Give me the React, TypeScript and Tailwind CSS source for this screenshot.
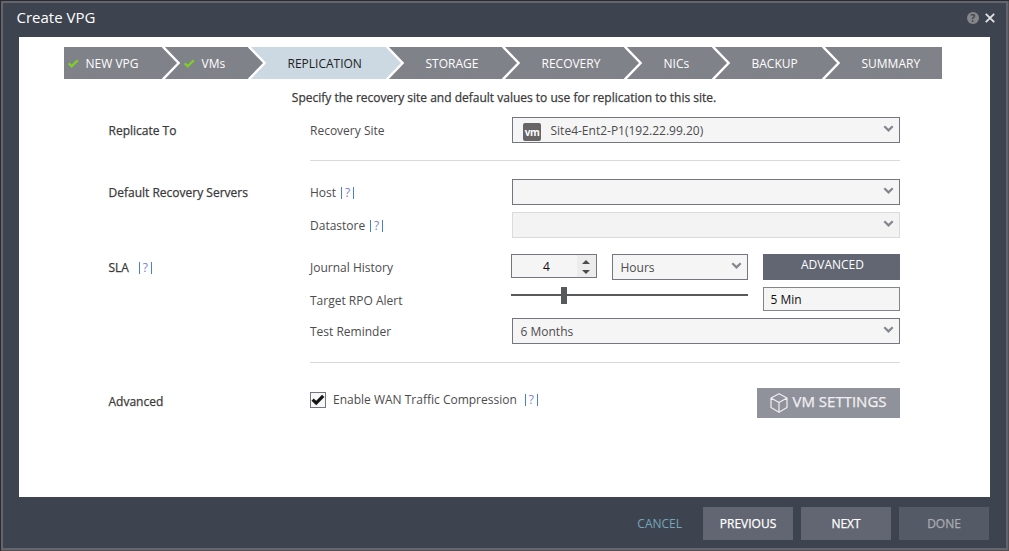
import React, { useState } from 'react';
import clsx from 'clsx';

interface Step {
  label: string;
  width: string;
  done?: boolean;
  active?: boolean;
}

const STEPS: Step[] = [
  { label: 'NEW VPG', width: 'w-[98px]', done: true },
  { label: 'VMs', width: 'w-[86px]', done: true },
  { label: 'REPLICATION', width: 'w-[138px]', active: true },
  { label: 'STORAGE', width: 'w-[116px]' },
  { label: 'RECOVERY', width: 'w-[122px]' },
  { label: 'NICs', width: 'w-[88px]' },
  { label: 'BACKUP', width: 'w-[110px]' },
  { label: 'SUMMARY', width: 'w-[120px]' },
];

const Arrow: React.FC<{ active?: boolean }> = ({ active }) => (
  <svg className="absolute left-full top-0 z-10" width="19" height="32" viewBox="0 0 19 32">
    <path d="M0 0H1.3L16.6 16L1.3 32H0Z" fill={active ? '#ccd9e2' : '#808289'} />
    <path d="M0.8 -0.5L16.6 16L0.8 32.5" fill="none" stroke="#fff" strokeWidth="2.4" />
  </svg>
);

const Wizard = () => (
  <div className="flex h-8 w-[878px]">
    {STEPS.map((step, i) => (
      <div
        key={step.label}
        className={clsx(
          'relative flex shrink-0 items-center whitespace-nowrap text-[12px]',
          step.width,
          i === 0 ? 'pl-1' : 'pl-[22px]',
          step.active ? 'bg-[#ccd9e2] text-[#222]' : 'bg-[#808289] text-white',
        )}
      >
        <span className="flex w-[17.5px] shrink-0">
          {step.done && (
            <svg width="11" height="9" viewBox="0 0 11 9">
              <path d="M0.6 4.4L3.7 7.2L9.8 1.2" fill="none" stroke="#7ed321" strokeWidth="2.2" />
            </svg>
          )}
        </span>
        <span className="pt-[2px]">{step.label}</span>
        {i < STEPS.length - 1 && <Arrow active={step.active} />}
      </div>
    ))}
  </div>
);

const Hint = ({ className }: { className?: string }) => (
  <span
    className={clsx(
      'inline-flex h-3 w-[13px] items-center justify-center border-x border-[#4a7fd0] text-[12px] leading-3 text-[#7b80d8]',
      className,
    )}
  >
    ?
  </span>
);

const Select: React.FC<{ className?: string; disabled?: boolean; icon?: React.ReactNode; children?: React.ReactNode }> = ({
  className,
  disabled,
  icon,
  children,
}) => (
  <div
    className={clsx(
      'flex h-[26px] items-center justify-between border pl-[7.5px] pr-[5px] text-[#4c4c4e]',
      disabled ? 'border-[#dbdbdb] bg-[#f3f3f3]' : 'border-[#72777f] bg-[#f5f5f5]',
      className,
    )}
  >
    <span className="flex items-center">
      {icon}
      <span className="pt-[2px]">{children}</span>
    </span>
    <svg className="-mt-[2px]" width="11" height="8" viewBox="0 0 11 8">
      <path d="M1.3 1.3L5.5 5.4L9.7 1.3" fill="none" stroke="#83868c" strokeWidth="2.2" />
    </svg>
  </div>
);

const Row: React.FC<{ section?: React.ReactNode; label: React.ReactNode; className?: string; children?: React.ReactNode }> = ({
  section,
  label,
  className,
  children,
}) => (
  <div className={clsx('flex h-[26px] items-center', className)}>
    <div className="flex w-[202px] items-center pl-[0.5px] pt-[2px] text-[#3a3a3a] [-webkit-text-stroke:0.25px_#3a3a3a]">
      {section}
    </div>
    <div className="flex w-[202px] items-center pt-[2px]">{label}</div>
    {children}
  </div>
);

export default function App() {
  const [compression, setCompression] = useState(true);

  return (
    <div className="h-[551px] w-[1009px] overflow-hidden border-l border-t border-[#2b2a2e] bg-[#544e50] font-['Open_Sans',sans-serif] text-[12px] text-[#4c4c4e]">
      <div className="flex h-[549px] w-[1007px] flex-col border-2 border-[#63656f] bg-[#3e444f]">
        <header className="flex h-[34px] items-center justify-between pl-[13.5px] pr-[11px]">
          <h1 className="-mt-[5px] text-[15px] text-white">Create VPG</h1>
          <div className="-mt-[4px] flex items-center gap-[6px]">
            <span className="flex h-3 w-3 items-center justify-center rounded-full bg-[#85868a] text-[10px] font-bold leading-3 text-[#3e444f]">
              ?
            </span>
            <svg width="10" height="10" viewBox="0 0 10 10">
              <path d="M0.8 0.8L9.2 9.2M9.2 0.8L0.8 9.2" stroke="#e3e4e6" strokeWidth="1.8" />
            </svg>
          </div>
        </header>

        <main className="ml-4 h-[460px] w-[971px] bg-white pl-[45px] pt-[10px]">
          <Wizard />
          <p className="mt-[10px] w-[878px] pl-[2px] text-center leading-[18px] text-[#3a3a3a] [-webkit-text-stroke:0.25px_#3a3a3a]">
            Specify the recovery site and default values to use for replication to this site.
          </p>

          <div className="ml-[44px] mt-[10px] w-[792px]">
            <Row section="Replicate To" label="Recovery Site">
              <Select
                className="w-[388px]"
                icon={
                  <span className="ml-[2.5px] mr-[9.5px] mt-[3px] flex h-[18px] w-[18px] items-center justify-center rounded-[2px] bg-[#696566] text-[10px] font-bold leading-none tracking-[-0.5px] text-white">
                    vm
                  </span>
                }
              >
                Site4-Ent2-P1(192.22.99.20)
              </Select>
            </Row>
            <div className="ml-[202px] mt-[17px] h-px w-[590px] bg-[#d9d9d9]" />

            <Row className="mt-[18px]" section="Default Recovery Servers" label={<>Host <Hint className="ml-[5px]" /></>}>
              <Select className="w-[388px]" />
            </Row>
            <Row className="mt-[7px]" label={<>Datastore <Hint className="ml-[5px]" /></>}>
              <Select className="w-[388px]" disabled />
            </Row>

            <Row className="mt-4" section={<>SLA <Hint className="ml-[10px] [-webkit-text-stroke:0]" /></>} label="Journal History">
              <div className="-ml-px flex h-6 w-[86px] self-start border border-[#72777f] bg-[#f5f5f5]">
                <span className="flex-1 pl-[4px] text-center leading-6 text-[#111]">4</span>
                <span className="flex w-[19px] flex-col items-center justify-center gap-[6px] bg-[#ececec] pr-[2px] pt-px">
                  <svg width="8" height="4" viewBox="0 0 8 4">
                    <path d="M0 4L4 0L8 4Z" fill="#4a4a4a" />
                  </svg>
                  <svg width="8" height="4" viewBox="0 0 8 4">
                    <path d="M0 0L4 4L8 0Z" fill="#4a4a4a" />
                  </svg>
                </span>
              </div>
              <Select className="ml-[15px] w-[136px]">Hours</Select>
              <button className="ml-[15px] h-[26px] w-[137px] bg-[#616672] pb-1 pl-[2px] text-[12px] leading-[22px] text-white">
                ADVANCED
              </button>
            </Row>

            <Row className="mt-[7px]" label="Target RPO Alert">
              <div className="-ml-px flex h-[17px] w-[237px] items-center self-start">
                <span className="mb-px h-[2px] w-[50px] bg-[#58595b]" />
                <span className="h-[17px] w-[6px] bg-[#58595b]" />
                <span className="mb-px h-[2px] flex-1 bg-[#58595b]" />
              </div>
              <div className="ml-[15px] h-6 w-[137px] self-start border border-[#83858c] bg-[#f5f5f5] pl-[6.5px] leading-6 text-[#111]">
                5 Min
              </div>
            </Row>
            <Row className="mt-[5px]" label="Test Reminder">
              <Select className="w-[388px]">6 Months</Select>
            </Row>
            <div className="ml-[202px] mt-[18px] h-px w-[590px] bg-[#d9d9d9]" />

            <div className="mt-[25px] flex h-[30px] w-[792px] items-start">
              <div className="w-[202px] pl-[0.5px] pt-[5px] leading-[18px] text-[#3a3a3a] [-webkit-text-stroke:0.25px_#3a3a3a]">
                Advanced
              </div>
              <button
                className="mt-1 flex h-4 w-4 items-center justify-center border border-[#72777f] bg-[#f8f8f8]"
                onClick={() => setCompression(!compression)}
              >
                {compression && (
                  <svg width="14" height="12" viewBox="0 0 14 12">
                    <path d="M1.6 5.6L5.2 9L12.2 1.8" fill="none" stroke="#151515" strokeWidth="3.2" />
                  </svg>
                )}
              </button>
              <span className="ml-[7px] mt-[3px] flex items-center leading-[18px]">
                Enable WAN Traffic Compression <Hint className="ml-2" />
              </span>
              <button className="ml-auto flex h-[30px] w-[143px] items-start bg-[#8f929a] pl-[13px] text-[15px] text-[#f0f0f2] [-webkit-text-stroke:0.25px_#f0f0f2]">
                <svg className="mt-[5px]" width="18" height="20" viewBox="0 0 18 20">
                  <path
                    d="M9 0.8L17 5V14.6L9 19.2L1 14.6V5ZM1 5L9 9.6L17 5M9 9.6V19.2"
                    fill="none"
                    stroke="#f0f0f2"
                    strokeWidth="1.2"
                    strokeLinejoin="round"
                  />
                </svg>
                <span className="ml-[4.5px] whitespace-nowrap leading-[27px]">VM SETTINGS</span>
              </button>
            </div>
          </div>
        </main>

        <footer className="mt-[10px] flex h-[33px] items-center justify-end gap-2 pr-[17px] text-[12px]">
          <button className="mr-[13px] text-[#75a6bd]">CANCEL</button>
          <button className="h-[33px] w-[90px] bg-[#616672] text-white [-webkit-text-stroke:0.25px_#fff]">PREVIOUS</button>
          <button className="h-[33px] w-[90px] bg-[#616672] text-white [-webkit-text-stroke:0.25px_#fff]">NEXT</button>
          <button className="h-[33px] w-[90px] bg-[#555b66] text-[#a9acb2] [-webkit-text-stroke:0.25px_#a9acb2]">DONE</button>
        </footer>
      </div>
    </div>
  );
}
